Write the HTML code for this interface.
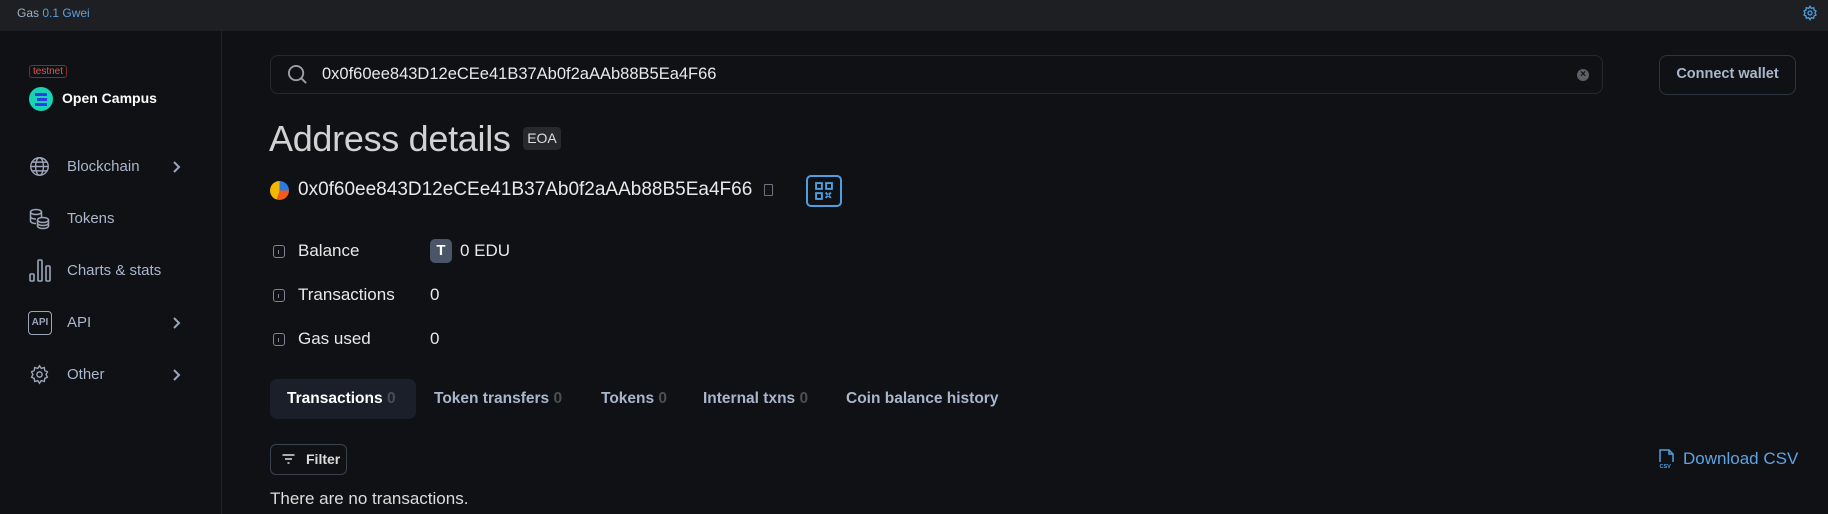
<!DOCTYPE html>
<html><head><meta charset="utf-8"><style>
*{margin:0;padding:0;box-sizing:border-box}
body{width:1828px;height:514px;background:#101114;font-family:"Liberation Sans",sans-serif;color:#e2e2e2;position:relative;overflow:hidden}
.a{position:absolute;white-space:nowrap}
.top{left:0;top:0;width:1828px;height:31px;background:#1e1f22}
.nav{color:#a9b6cc;font-size:15px}
.tab{font-size:15.5px;font-weight:bold;color:#a9b6cc;top:390px}
.tab span{color:#4a4e55}
.lbl{font-size:17px;color:#e8e8e8}
.ic{width:12px;height:13px;border:1.5px solid #7b8593;border-radius:3px}
.ic:after{content:"";position:absolute;left:3.5px;top:4px;width:1.5px;height:4px;background:#7b8593}
</style></head><body>
<div class="a top"></div>
<div class="a" style="left:17px;top:6px;font-size:12px;color:#5b9fe0"><span style="color:#9fb0c8">Gas</span> 0.1 Gwei</div>
<svg class="a" style="left:1802px;top:5px" width="16" height="16" viewBox="0 0 24 24" fill="none" stroke="#4f9fe0" stroke-width="2"><circle cx="12" cy="12" r="3"/><path d="M12 2l2 3 3.5-1 .5 3.5 3 1.5-1.5 3 1.5 3-3 1.5-.5 3.5-3.5-1-2 3-2-3-3.5 1-.5-3.5-3-1.5 1.5-3-1.5-3 3-1.5.5-3.5 3.5 1z"/></svg>
<div class="a" style="left:221px;top:31px;width:1px;height:483px;background:#222428"></div>
<div class="a" style="left:29px;top:65px;border:1px solid #7a2d2d;border-radius:3px;color:#d45a5a;font-size:10px;padding:0 3px;line-height:11px">testnet</div>
<div class="a" style="left:29px;top:87px;width:24px;height:24px;border-radius:50%;background:#19d3b5"></div>
<div class="a" style="left:35px;top:93px;width:12px;height:3px;background:#2a3ee8"></div>
<div class="a" style="left:37px;top:98px;width:10px;height:3px;background:#2a3ee8"></div>
<div class="a" style="left:35px;top:103px;width:12px;height:3px;background:#2a3ee8"></div>
<div class="a" style="left:62px;top:90px;font-size:14px;font-weight:bold;color:#fff">Open Campus</div>
<svg class="a" style="left:29px;top:156px" width="21" height="21" viewBox="0 0 24 24" fill="none" stroke="#9aa6b8" stroke-width="1.6"><circle cx="12" cy="12" r="10"/><ellipse cx="12" cy="12" rx="4.5" ry="10"/><path d="M2 12h20M4 7h16M4 17h16"/></svg>
<div class="a nav" style="left:67px;top:158px">Blockchain</div>
<svg class="a" style="left:172px;top:160px" width="10" height="14" viewBox="0 0 10 14" fill="none" stroke="#9aa6b8" stroke-width="2"><path d="M2 2l5 5-5 5"/></svg>
<svg class="a" style="left:29px;top:208px" width="21" height="22" viewBox="0 0 21 22" fill="none" stroke="#9aa6b8" stroke-width="1.5"><ellipse cx="7" cy="4" rx="5.5" ry="2.5"/><path d="M1.5 4v9c0 1.4 2.5 2.5 5.5 2.5M1.5 8.5c0 1.4 2.5 2.5 5.5 2.5M12.5 4v5"/><ellipse cx="14" cy="12" rx="5.5" ry="2.5"/><path d="M8.5 12v6c0 1.4 2.5 2.5 5.5 2.5s5.5-1.1 5.5-2.5v-6M8.5 15c0 1.4 2.5 2.5 5.5 2.5s5.5-1.1 5.5-2.5"/></svg>
<div class="a nav" style="left:67px;top:210px">Tokens</div>
<svg class="a" style="left:29px;top:259px" width="22" height="23" viewBox="0 0 22 23" fill="none" stroke="#9aa6b8" stroke-width="1.6"><rect x="1" y="15" width="4" height="7" rx="1"/><rect x="9" y="1" width="4" height="21" rx="1"/><rect x="17" y="7" width="4" height="15" rx="1"/></svg>
<div class="a nav" style="left:67px;top:262px">Charts &amp; stats</div>
<div class="a" style="left:28px;top:311px;width:24px;height:24px;border:1.5px solid #9aa6b8;border-radius:4px;font-size:10px;font-weight:bold;color:#9aa6b8;text-align:center;line-height:21px">API</div>
<div class="a nav" style="left:67px;top:314px">API</div>
<svg class="a" style="left:172px;top:316px" width="10" height="14" viewBox="0 0 10 14" fill="none" stroke="#9aa6b8" stroke-width="2"><path d="M2 2l5 5-5 5"/></svg>
<svg class="a" style="left:29px;top:364px" width="21" height="21" viewBox="0 0 24 24" fill="none" stroke="#9aa6b8" stroke-width="1.6"><circle cx="12" cy="12" r="3"/><path d="M12 2l2 3 3.5-1 .5 3.5 3 1.5-1.5 3 1.5 3-3 1.5-.5 3.5-3.5-1-2 3-2-3-3.5 1-.5-3.5-3-1.5 1.5-3-1.5-3 3-1.5.5-3.5 3.5 1z"/></svg>
<div class="a nav" style="left:67px;top:366px">Other</div>
<svg class="a" style="left:172px;top:368px" width="10" height="14" viewBox="0 0 10 14" fill="none" stroke="#9aa6b8" stroke-width="2"><path d="M2 2l5 5-5 5"/></svg>

<div class="a" style="left:270px;top:55px;width:1333px;height:39px;border:1.5px solid #25282d;border-radius:8px"></div>
<svg class="a" style="left:287px;top:64px" width="21" height="21" viewBox="0 0 22 22" fill="none" stroke="#9aa0a8" stroke-width="2"><circle cx="9.5" cy="9.5" r="7.5"/><path d="M15 15l5 5"/></svg>
<div class="a" style="left:322px;top:65px;font-size:16.5px;color:#e8e8e8">0x0f60ee843D12eCEe41B37Ab0f2aAAb88B5Ea4F66</div>
<div class="a" style="left:1577px;top:69px;width:12px;height:12px;border-radius:50%;background:#5b5f66;color:#101114;font-size:10px;line-height:12px;text-align:center;font-weight:bold">×</div>
<div class="a" style="left:1659px;top:55px;width:137px;height:40px;border:1.5px solid #2d3440;border-radius:8px;color:#a9b6cc;font-size:14.5px;font-weight:bold;text-align:center;line-height:37px">Connect wallet</div>

<div class="a" style="left:269px;top:118px;font-size:36px;color:#d2d2d2;letter-spacing:-0.3px">Address details</div>
<div class="a" style="left:523px;top:127px;width:38px;height:23px;background:#27292d;border-radius:4px;font-size:14px;color:#ddd;text-align:center;line-height:23px">EOA</div>
<div class="a" style="left:270px;top:181px;width:19px;height:19px;border-radius:50%;background:conic-gradient(#2d7be0 0 25%,#f25a1c 25% 55%,#f5b800 55% 100%)"></div>
<div class="a" style="left:298px;top:179px;font-size:19px;color:#e8e8e8">0x0f60ee843D12eCEe41B37Ab0f2aAAb88B5Ea4F66</div>
<div class="a" style="left:764px;top:184px;width:9px;height:12px;border:1.5px solid #6b7380;border-radius:1px"></div>
<div class="a" style="left:806px;top:175px;width:36px;height:32px;border:2px solid #4f9fe0;border-radius:5px"></div>
<svg class="a" style="left:815px;top:182px" width="18" height="18" viewBox="0 0 17 17" fill="none" stroke="#4f9fe0" stroke-width="1.8"><rect x="1" y="1" width="5.5" height="5.5"/><rect x="10.5" y="1" width="5.5" height="5.5"/><rect x="1" y="10.5" width="5.5" height="5.5"/><path d="M10 10l2 2M15 10l-2 2M10 15l2-2M15 15l-2-2"/></svg>

<div class="a ic" style="left:273px;top:245px"></div><div class="a lbl" style="left:298px;top:241px">Balance</div>
<div class="a" style="left:430px;top:239px;width:22px;height:24px;background:#4a5568;border-radius:5px;color:#fff;font-weight:bold;font-size:15px;text-align:center;line-height:24px">T</div>
<div class="a lbl" style="left:460px;top:241px">0 EDU</div>
<div class="a ic" style="left:273px;top:289px"></div><div class="a lbl" style="left:298px;top:285px">Transactions</div><div class="a lbl" style="left:430px;top:285px">0</div>
<div class="a ic" style="left:273px;top:333px"></div><div class="a lbl" style="left:298px;top:329px">Gas used</div><div class="a lbl" style="left:430px;top:329px">0</div>

<div class="a" style="left:270px;top:379px;width:146px;height:40px;background:#1a1f29;border-radius:7px"></div>
<div class="a tab" style="left:287px;color:#fff">Transactions <span>0</span></div>
<div class="a tab" style="left:434px">Token transfers <span>0</span></div>
<div class="a tab" style="left:601px">Tokens <span>0</span></div>
<div class="a tab" style="left:703px">Internal txns <span>0</span></div>
<div class="a tab" style="left:846px">Coin balance history</div>

<div class="a" style="left:270px;top:444px;width:77px;height:31px;border:1.5px solid #3a4250;border-radius:6px"></div>
<svg class="a" style="left:281px;top:453px" width="15" height="12" viewBox="0 0 14 12" stroke="#ddd" stroke-width="1.6"><path d="M1 2h12M3.5 6h7M6 10h2"/></svg>
<div class="a" style="left:306px;top:451px;font-size:14px;font-weight:bold;color:#ddd">Filter</div>
<div class="a" style="left:270px;top:489px;font-size:17px;color:#ddd">There are no transactions.</div>

<svg class="a" style="left:1659px;top:449px" width="16" height="20" viewBox="0 0 16 20" fill="none" stroke="#4f9fe0" stroke-width="1.5"><path d="M1 13V1h9l4 4v8M10 1v4h4"/><text x="0.5" y="19" font-size="5.5" font-weight="bold" fill="#4f9fe0" stroke="none" font-family="Liberation Sans">CSV</text></svg>
<div class="a" style="left:1683px;top:449px;font-size:17px;color:#5ea4e4">Download CSV</div>
</body></html>
